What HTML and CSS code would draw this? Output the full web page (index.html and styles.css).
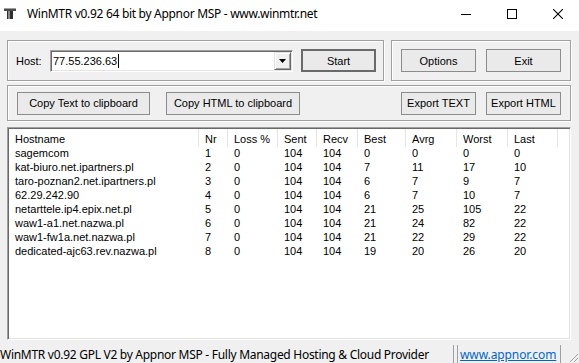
FILE: index.html
```html
<!DOCTYPE html>
<html>
<head>
<meta charset="utf-8">
<title>WinMTR</title>
<link rel="stylesheet" href="styles.css">
</head>
<body>
<div class="window">
  <div class="titlebar">
    <svg class="app-icon" width="16" height="16" viewBox="0 0 16 16">
      <rect x="2" y="3" width="12" height="3" fill="#4a4a4a"/>
      <rect x="2" y="3" width="12" height="1" fill="#a0a0a0"/>
      <rect x="5" y="6" width="6" height="8" fill="#2e2e2e"/>
      <rect x="6" y="6" width="2" height="8" fill="#8a8a8a"/>
    </svg>
    <span class="title">WinMTR v0.92 64 bit by Appnor MSP - www.winmtr.net</span>
    <div class="controls">
      <span class="ctl"><svg width="10" height="10" viewBox="0 0 10 10"><rect x="0" y="5" width="10" height="1" fill="#000"/></svg></span>
      <span class="ctl"><svg width="10" height="10" viewBox="0 0 10 10"><rect x="0.5" y="0.5" width="9" height="9" fill="none" stroke="#000" stroke-width="1"/></svg></span>
      <span class="ctl"><svg width="10" height="10" viewBox="0 0 10 10"><path d="M0 0L10 10M10 0L0 10" stroke="#000" stroke-width="1.1"/></svg></span>
    </div>
  </div>

  <div class="content">
    <div class="row1">
      <div class="group host-group">
        <span class="host-label">Host:</span>
        <div class="combo">
          <span class="combo-text">77.55.236.63</span><span class="caret"></span>
          <span class="combo-btn"><svg width="7" height="4" viewBox="0 0 7 4"><polygon points="0,0 7,0 3.5,4" fill="#000"/></svg></span>
        </div>
        <button class="btn btn-default">Start</button>
      </div>
      <div class="group opts-group">
        <button class="btn">Options</button>
        <button class="btn">Exit</button>
      </div>
    </div>

    <div class="group export-group">
      <button class="btn btn-copy-text">Copy Text to clipboard</button>
      <button class="btn btn-copy-html">Copy HTML to clipboard</button>
      <span class="spacer"></span>
      <button class="btn">Export TEXT</button>
      <button class="btn">Export HTML</button>
    </div>

    <div class="list">
      <div class="lrow lhead">
        <span>Hostname</span><span>Nr</span><span>Loss %</span><span>Sent</span><span>Recv</span><span>Best</span><span>Avrg</span><span>Worst</span><span>Last</span><span class="filler"></span>
      </div>
      <div class="lrow"><span>sagemcom</span><span>1</span><span>0</span><span>104</span><span>104</span><span>0</span><span>0</span><span>0</span><span>0</span><span></span></div>
      <div class="lrow"><span>kat-biuro.net.ipartners.pl</span><span>2</span><span>0</span><span>104</span><span>104</span><span>7</span><span>11</span><span>17</span><span>10</span><span></span></div>
      <div class="lrow"><span>taro-poznan2.net.ipartners.pl</span><span>3</span><span>0</span><span>104</span><span>104</span><span>6</span><span>7</span><span>9</span><span>7</span><span></span></div>
      <div class="lrow"><span>62.29.242.90</span><span>4</span><span>0</span><span>104</span><span>104</span><span>6</span><span>7</span><span>10</span><span>7</span><span></span></div>
      <div class="lrow"><span>netarttele.ip4.epix.net.pl</span><span>5</span><span>0</span><span>104</span><span>104</span><span>21</span><span>25</span><span>105</span><span>22</span><span></span></div>
      <div class="lrow"><span>waw1-a1.net.nazwa.pl</span><span>6</span><span>0</span><span>104</span><span>104</span><span>21</span><span>24</span><span>82</span><span>22</span><span></span></div>
      <div class="lrow"><span>waw1-fw1a.net.nazwa.pl</span><span>7</span><span>0</span><span>104</span><span>104</span><span>21</span><span>22</span><span>29</span><span>22</span><span></span></div>
      <div class="lrow"><span>dedicated-ajc63.rev.nazwa.pl</span><span>8</span><span>0</span><span>104</span><span>104</span><span>19</span><span>20</span><span>26</span><span>20</span><span></span></div>
    </div>
  </div>

  <div class="statusbar">
    <div class="panel panel-main">WinMTR v0.92 GPL V2 by Appnor MSP - Fully Managed Hosting &amp; Cloud Provider</div>
    <div class="panel panel-link"><a class="link" href="#">www.appnor.com</a></div>
    <div class="grip">
      <svg width="12" height="12" viewBox="0 0 12 12">
        <path d="M11 3L3 11M11 7L7 11" stroke="#a0a0a0" stroke-width="1"/>
      </svg>
    </div>
  </div>
</div>
</body>
</html>
```

FILE: styles.css
```css
html, body {
  margin: 0;
  padding: 0;
}

body {
  width: 579px;
  height: 363px;
  overflow: hidden;
  background: #f0f0f0;
  font-family: "Liberation Sans", Arial, sans-serif;
  font-size: 11px;
  color: #000;
}

.window {
  display: flex;
  flex-direction: column;
  width: 579px;
  height: 363px;
}

/* Title bar */
.titlebar {
  height: 31px;
  background: #fff;
  display: flex;
  align-items: flex-start;
  flex-shrink: 0;
}

.app-icon {
  margin: 5px 0 0 2px;
  flex-shrink: 0;
}

.title {
  font-family: "Noto Sans", sans-serif;
  font-size: 12px;
  letter-spacing: -0.3px;
  line-height: 16px;
  margin: 6px 0 0 9px;
  white-space: nowrap;
}

.controls {
  margin-left: auto;
  margin-right: -2px;
  display: flex;
}

.ctl {
  width: 46px;
  height: 27px;
  display: flex;
  align-items: center;
  justify-content: center;
}

.ctl svg {
  display: block;
}

/* Content */
.content {
  padding: 9px 8px 0 7px;
  display: flex;
  flex-direction: column;
}

.row1 {
  display: flex;
  gap: 7px;
  height: 41px;
}

.group {
  box-sizing: border-box;
  border: 1px solid #a0a0a0;
  box-shadow: inset 1px 1px #fff, 1px 1px #fff;
  display: flex;
  align-items: center;
}

.host-group {
  width: 377px;
  padding-left: 8px;
}

.host-label {
  width: 34px;
  flex-shrink: 0;
}

.combo {
  box-sizing: border-box;
  width: 243px;
  height: 22px;
  margin-right: 8px;
  background: #fff;
  border: 1px solid;
  border-color: #a0a0a0 #fff #fff #a0a0a0;
  box-shadow: inset 1px 1px #696969, inset -1px -1px #e3e3e3;
  display: flex;
  align-items: center;
  padding: 1px 1px 1px 2px;
}

.combo-text {
  line-height: 14px;
}

.caret {
  width: 1px;
  height: 14px;
  background: #000;
  margin-left: 1px;
}

.combo-btn {
  margin-left: auto;
  box-sizing: border-box;
  width: 17px;
  height: 18px;
  background: #f0f0f0;
  border: 1px solid;
  border-color: #e3e3e3 #696969 #696969 #e3e3e3;
  box-shadow: inset 1px 1px #fff, inset -1px -1px #a0a0a0;
  display: flex;
  align-items: center;
  justify-content: center;
}

.combo-btn svg {
  display: block;
}

.btn {
  box-sizing: border-box;
  width: 75px;
  height: 23px;
  padding: 0;
  margin: 0;
  border: 1px solid #8c8c8c;
  background: #eaeaea;
  font-family: "Liberation Sans", Arial, sans-serif;
  font-size: 11px;
  color: #000;
  flex-shrink: 0;
}

.btn-default {
  border: 2px solid #6a6a6a;
}

.opts-group {
  flex: 1;
  padding-left: 9px;
  gap: 10px;
}

.export-group {
  margin-top: 4px;
  height: 36px;
  padding: 0 9px;
}

.btn-copy-text {
  width: 133px;
  margin-right: 16px;
}

.btn-copy-html {
  width: 134px;
}

.spacer {
  flex: 1;
}

.export-group .btn + .btn {
  margin-left: 10px;
}

.export-group .btn-copy-text + .btn-copy-html {
  margin-left: 0;
}

/* List view */
.list {
  box-sizing: border-box;
  margin-top: 6px;
  height: 213px;
  background: #fff;
  border: 1px solid;
  border-color: #a0a0a0 #fff #fff #a0a0a0;
  box-shadow: inset 1px 1px #696969, inset -1px -1px #e3e3e3;
  padding: 1px;
  overflow: hidden;
}

.lrow {
  display: grid;
  grid-template-columns: 190px 29px 50px 39px 41px 48px 51px 51px 50px 1fr;
  height: 14px;
  line-height: 14px;
}

.lrow > span {
  padding-left: 6px;
  white-space: nowrap;
  overflow: hidden;
}

.lrow.lhead {
  height: 18px;
  margin-bottom: -1px;
}

.lhead > span {
  line-height: 16px;
  padding-top: 2px;
  border-right: 1px solid #e5e5e5;
}

.lhead > span.filler {
  border-right: none;
}

/* Status bar */
.statusbar {
  display: flex;
  margin-top: 5px;
  height: 18px;
  font-family: "Noto Sans", sans-serif;
  font-size: 12px;
  line-height: 16px;
}

.panel {
  box-sizing: border-box;
  white-space: nowrap;
  overflow: hidden;
  padding-top: 2px;
}

.panel-main {
  width: 454px;
  border-right: 1px solid #a0a0a0;
  padding-left: 0;
  margin-right: 3px;
  letter-spacing: -0.28px;
}

.panel-link {
  width: 104px;
  border-left: 1px solid #a0a0a0;
  border-right: 1px solid #a0a0a0;
  padding-left: 2px;
  letter-spacing: -0.1px;
}

.link {
  color: #0066cc;
  text-decoration: underline;
}

.grip {
  flex: 1;
  display: flex;
  justify-content: flex-end;
  align-items: flex-end;
}

.grip svg {
  display: block;
}
```
